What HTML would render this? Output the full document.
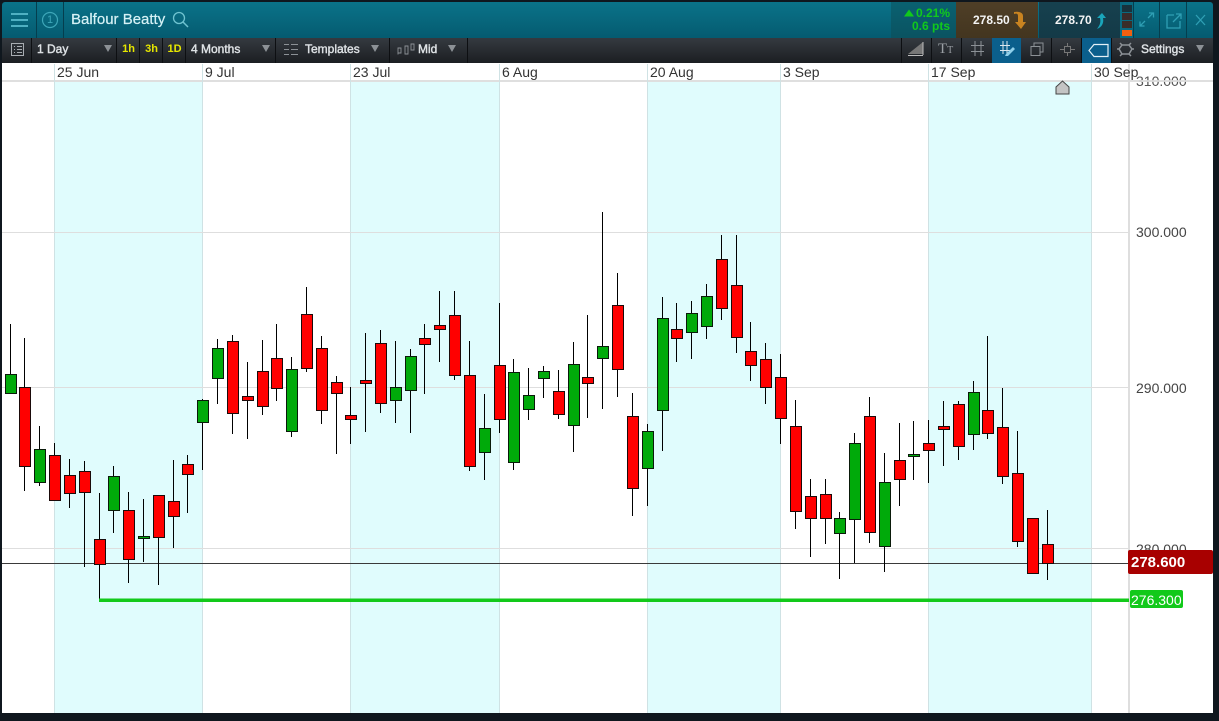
<!DOCTYPE html>
<html><head><meta charset="utf-8"><style>
html,body{margin:0;padding:0;background:#0f171e;width:1219px;height:721px;overflow:hidden;font-family:"Liberation Sans",sans-serif}
.a{position:absolute}
.t{position:absolute;white-space:nowrap}
.tb{color:#dfe3e6;font-size:12px;-webkit-text-stroke:.4px #dfe3e6;top:42px;line-height:14px}
.y{color:#e6e600;font-size:11px;font-weight:bold;top:43px;line-height:12px;text-align:center;width:23px}
.d{color:#333;font-size:14px;top:64px;line-height:16px}
.p{color:#444;font-size:14px;left:1136px;line-height:16px}
.s{position:absolute;top:38px;width:1px;height:25px;background:#0d0f12}
</style></head><body>
<div class="a" style="left:2px;top:2px;width:1211px;height:36px;border-radius:3px 3px 0 0;background:linear-gradient(#0a7389,#055b70)"></div>
<div class="a" style="left:2px;top:38px;width:1211px;height:25px;background:linear-gradient(#353a40,#1b1e22)"></div>
<div class="a" style="left:2px;top:63px;width:1211px;height:650px;background:#fff"></div>
<div class="a" style="left:36px;top:2px;width:1px;height:36px;background:#053e4e"></div>
<div class="a" style="left:63px;top:2px;width:1px;height:36px;background:#053e4e"></div>
<div class="a" style="left:891px;top:2px;width:65px;height:36px;background:linear-gradient(#0a6171,#0a5361)"></div>
<div class="a" style="left:956px;top:2px;width:82px;height:36px;background:linear-gradient(#4f3f27,#43351f)"></div>
<div class="a" style="left:1039px;top:2px;width:81px;height:36px;background:linear-gradient(#16414f,#143a47)"></div>
<div class="a" style="left:1120px;top:2px;width:14px;height:36px;background:#0a6a80"></div>
<div class="a" style="left:1133px;top:2px;width:1px;height:36px;background:#053e4e"></div>
<div class="a" style="left:1159px;top:2px;width:1px;height:36px;background:#053e4e"></div>
<div class="a" style="left:1186px;top:2px;width:1px;height:36px;background:#053e4e"></div>
<div class="a" style="left:1122px;top:5px;width:10px;height:7px;background:#18323c"></div>
<div class="a" style="left:1122px;top:13px;width:10px;height:7px;background:#3a2a2a"></div>
<div class="a" style="left:1122px;top:21px;width:10px;height:7px;background:#3a2e28"></div>
<div class="a" style="left:1122px;top:30px;width:10px;height:6px;background:#f06010"></div>
<div class="a" style="left:992px;top:38px;width:29px;height:25px;background:#0b5f8c"></div>
<div class="a" style="left:1082px;top:38px;width:29px;height:25px;background:#0b5f8c"></div>
<div class="s" style="left:31px"></div><div class="s" style="left:116px"></div><div class="s" style="left:139px"></div><div class="s" style="left:162px"></div><div class="s" style="left:185px"></div><div class="s" style="left:275px"></div><div class="s" style="left:389px"></div><div class="s" style="left:467px"></div><div class="s" style="left:901px"></div><div class="s" style="left:931px"></div><div class="s" style="left:961px"></div><div class="s" style="left:1051px"></div><div class="s" style="left:1081px"></div><div class="s" style="left:1111px"></div>

<div class="t" style="left:1136px;top:73px;color:#555;font-size:14px;line-height:16px">310.000</div>

<svg class="a" style="left:0;top:0" width="1219" height="721" viewBox="0 0 1219 721">
<g shape-rendering="crispEdges">
<rect x="2" y="80" width="1211" height="2" fill="#dcdcdc" fill-opacity=".9"/>
<path fill="#e0fcfd" d="M55 82H202V713H55zM351 82H499V713H351zM648 82H780V713H648zM929 82H1091V713H929z"/>
<path stroke="#cfe2e4" fill="none" d="M54.500 64V713M202.500 64V713M350.500 64V713M499.500 64V713M647.500 64V713M780.500 64V713M928.500 64V713M1091.500 64V713"/>
<path stroke="#dedede" fill="none" d="M2 232.500H1130M2 387.500H1130M2 548.500H1130"/>
<path stroke="#dedede" stroke-width="2" fill="none" d="M1129 64V713"/>
<path stroke="#3a3a3a" fill="none" d="M2 563.500H1128"/>
<path stroke="#000" fill="none" d="M10.500 324V374M24.500 338V491M39.500 426V486M54.500 443V456M69.500 459V508M84.500 461V567M99.500 493V600M113.500 466V533M128.500 492V583M143.500 499V562M158.500 537V585M173.500 460V548M187.500 455V513M202.500 399V470M217.500 339V404M232.500 335V434M247.500 362V439M262.500 340V415M276.500 324V401M291.500 357V437M306.500 287V372M321.500 336V424M336.500 376V454M350.500 387V444M365.500 333V432M380.500 330V413M395.500 341V423M410.500 349V433M424.500 324V394M439.500 291V362M454.500 291V380M469.500 341V471M484.500 394V480M499.500 303V433M513.500 359V470M528.500 368V420M543.500 366V398M558.500 370V419M573.500 342V452M587.500 315V418M602.500 212V409M617.500 273V397M632.500 393V516M647.500 424V506M662.500 297V451M676.500 303V362M691.500 301V359M706.500 284V339M721.500 235V320M736.500 235V353M750.500 322V381M765.500 343V404M780.500 354V444M795.500 400V529M810.500 479V557M825.500 479V544M839.500 512V579M854.500 433V563M869.500 397V543M884.500 453V572M899.500 423V506M913.500 421V480M928.500 420V483M943.500 401V466M958.500 401V460M973.500 381V450M987.500 336V439M1002.500 388V484M1017.500 431V547M1047.500 510V580"/>
<path fill="#f00" stroke="#1a0a0a" d="M19.500 387.500h11v79h-11zM49.500 455.500h11v45h-11zM64.500 475.500h11v18h-11zM79.500 471.500h11v21h-11zM94.500 539.500h11v25h-11zM123.500 510.500h11v49h-11zM153.500 495.500h11v42h-11zM168.500 501.500h11v15h-11zM182.500 464.500h11v10h-11zM227.500 341.500h11v72h-11zM242.500 396.500h11v4h-11zM257.500 371.500h11v35h-11zM271.500 358.500h11v30h-11zM301.500 314.500h11v54h-11zM316.500 348.500h11v62h-11zM331.500 382.500h11v11h-11zM345.500 415.500h11v4h-11zM360.500 380.500h11v3h-11zM375.500 343.500h11v60h-11zM419.500 338.500h11v6h-11zM434.500 325.500h11v4h-11zM449.500 315.500h11v60h-11zM464.500 375.500h11v91h-11zM494.500 365.500h11v54h-11zM553.500 391.500h11v23h-11zM582.500 377.500h11v6h-11zM612.500 305.500h11v64h-11zM627.500 416.500h11v72h-11zM671.500 329.500h11v9h-11zM716.500 259.500h11v49h-11zM731.500 285.500h11v52h-11zM745.500 351.500h11v14h-11zM760.500 359.500h11v28h-11zM775.500 377.500h11v41h-11zM790.500 426.500h11v85h-11zM805.500 496.500h11v22h-11zM820.500 494.500h11v24h-11zM864.500 416.500h11v116h-11zM894.500 460.500h11v19h-11zM923.500 443.500h11v7h-11zM938.500 426.500h11v3h-11zM953.500 404.500h11v42h-11zM982.500 410.500h11v23h-11zM997.500 427.500h11v49h-11zM1012.500 473.500h11v68h-11zM1027.500 518.500h11v55h-11zM1042.500 544.500h11v19h-11z"/>
<path fill="#00aa0a" stroke="#0a1a0a" d="M5.500 374.500h11v19h-11zM34.500 449.500h11v33h-11zM108.500 476.500h11v34h-11zM138.500 536.500h11v2h-11zM197.500 400.500h11v22h-11zM212.500 348.500h11v30h-11zM286.500 369.500h11v62h-11zM390.500 387.500h11v13h-11zM405.500 356.500h11v34h-11zM479.500 428.500h11v24h-11zM508.500 372.500h11v90h-11zM523.500 395.500h11v14h-11zM538.500 371.500h11v7h-11zM568.500 364.500h11v61h-11zM597.500 346.500h11v12h-11zM642.500 431.500h11v37h-11zM657.500 318.500h11v92h-11zM686.500 313.500h11v19h-11zM701.500 296.500h11v30h-11zM834.500 518.500h11v15h-11zM849.500 443.500h11v76h-11zM879.500 482.500h11v64h-11zM908.500 454.500h11v2h-11zM968.500 392.500h11v42h-11z"/>
</g>
<rect x="99" y="598.500" width="1030" height="3.500" fill="#12c91a"/>
<path d="M1056 94V87l6.500-6 6.500 6v7z" fill="#c4c4c4" stroke="#444"/>
<rect x="1128" y="550" width="85" height="24" rx="2" fill="#a80000"/>
<rect x="1130" y="590" width="53" height="18" rx="2" fill="#12c91a"/>

<g fill="none" stroke="#4fb0c2" stroke-width="2"><path d="M11 14H28M11 20H28M11 26H28"/></g>
<circle cx="50" cy="20" r="7.500" fill="none" stroke="#3da6b8" stroke-width="1.200"/>
<circle cx="179" cy="18" r="5.500" fill="none" stroke="#6fc3d0" stroke-width="1.300"/><path d="M183 22l5 5" stroke="#6fc3d0" stroke-width="1.500"/>
<path d="M904 16.500l5-7 5 7z" fill="#11c91c"/>
<path d="M1014 14c3-1 4 0 4 2v6h-3l6 7 5-7h-3v-6c0-3-3-5-9-4z" fill="#c98320"/>
<path d="M1097 29c3-4 4-7 3-11h-3l5-5 4 5h-3c1 5-1 9-6 11z" fill="#1aa6bb"/>
<g fill="none" stroke="#2f9fb4" stroke-width="1.300"><path d="M1140 26l5-5M1148 18l5-5M1149 13h4.500v4.500M1140 21.500V26h4.500"/><path d="M1167 15h7M1167 15v13h13v-7M1173 22l8-8M1176 14h5v5"/><path d="M1196 15l9 10M1205 15l-9 10"/></g>

<g fill="none" stroke="#a8adb2"><rect x="11.500" y="43.500" width="12" height="12"/><path d="M14 46.500h1M17 46.500h5M14 49.500h1M17 49.500h5M14 52.500h1M17 52.500h5"/></g>
<path fill="#8c9196" d="M104 45h8l-4 7zM262 45h8l-4 7zM371 45h8l-4 7zM448 45h8l-4 7zM1196 45h8l-4 7z"/>
<g fill="none" stroke="#8c9196"><path d="M284 44.500h14M284 49.500h14M284 54.500h14" stroke-dasharray="5 2 7"/><path d="M398 51.500v3M398 48h3v5h-3zM405 46h3v8h-3zM411 44h3v6h-3z" stroke-width=".9"/></g>
<path d="M908 54h15V42z" fill="#777"/><path d="M908 55.500h15M923 42v13" stroke="#bbb" fill="none"/>
<g fill="none" stroke="#8c9196"><path d="M971 45.500h13M971 51.500h13M975 41v15M981 41v15"/><path d="M1031 46.500h9v9h-9zM1034 46v-3h9v9h-3"/><path d="M1060 49.500h4M1071 49.500h4M1064.500 46.500h6v6h-6zM1067.500 43v3M1067.500 53v3" stroke="#777"/></g>
<g fill="none" stroke="#dbe7ee"><path d="M1000 45.500h10M1000 50.500h10M1003 41v13M1007 41v13"/></g>
<path d="M1006 54l7-7 2 2-7 7h-3z" fill="#8fd0ea"/>
<path d="M1089 50.500l5-6h14v12h-14z" fill="none" stroke="#e4f0f6" stroke-width="1.200"/>
<g fill="none" stroke="#8c9196" stroke-width="1.500"><path d="M1122 45h7l3 4-3 5h-7l-3-5z"/><path d="M1120 43l2 2M1129 45l2-2M1120 56l2-2M1129 54l2 2M1117 49h2M1132 49h2" /></g>
</svg>

<div class="t" style="left:71px;top:11px;color:#d6f2f6;font-size:15px;line-height:18px;-webkit-text-stroke:.2px #d6f2f6">Balfour Beatty</div>
<div class="t" style="left:47px;top:14px;color:#3da6b8;font-size:11px;line-height:12px">1</div>
<div class="t" style="right:269px;top:7px;color:#11c91c;font-size:12px;font-weight:bold;line-height:13px">0.21%</div>
<div class="t" style="right:269px;top:20px;color:#11c91c;font-size:12px;font-weight:bold;line-height:13px">0.6 pts</div>
<div class="t" style="left:973px;top:13px;color:#f4f4f4;font-size:12px;font-weight:bold;line-height:14px">278.50</div>
<div class="t" style="left:1055px;top:13px;color:#f4f4f4;font-size:12px;font-weight:bold;line-height:14px">278.70</div>

<div class="t tb" style="left:37px">1 Day</div>
<div class="t y" style="left:117px">1h</div><div class="t y" style="left:140px">3h</div><div class="t y" style="left:163px">1D</div>
<div class="t tb" style="left:191px">4 Months</div>
<div class="t tb" style="left:305px">Templates</div>
<div class="t tb" style="left:418px">Mid</div>
<div class="t tb" style="left:1141px">Settings</div>
<div class="t" style="left:938px;top:41px;color:#9a9fa4;font-family:'Liberation Serif',serif;font-size:15px;line-height:16px">T<span style="font-size:10px">T</span></div>

<div class="t d" style="left:57px">25 Jun</div><div class="t d" style="left:205px">9 Jul</div><div class="t d" style="left:353px">23 Jul</div><div class="t d" style="left:502px">6 Aug</div><div class="t d" style="left:650px">20 Aug</div><div class="t d" style="left:783px">3 Sep</div><div class="t d" style="left:931px">17 Sep</div><div class="t d" style="left:1094px">30 Sep</div>
<div class="t p" style="top:224px">300.000</div>
<div class="t p" style="top:380px">290.000</div>
<div class="t p" style="top:541px;clip-path:inset(0 0 7px 0)">280.000</div>
<div class="t" style="left:1131px;top:554px;color:#fff;font-size:15px;font-weight:bold;line-height:18px">278.600</div>
<div class="t" style="left:1131px;top:592px;color:#fff;font-size:14px;line-height:16px">276.300</div>
</body></html>
